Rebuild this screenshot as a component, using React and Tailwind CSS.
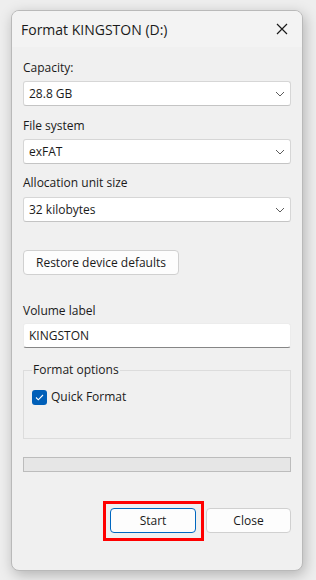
import React from 'react';

const font = { fontFamily: '"Open Sans", "Noto Sans", sans-serif' };

const Chevron = () => (
  <svg width="10" height="6" viewBox="0 0 10 6" className="mr-[5px]">
    <polyline points="1,1 5,5 9,1" fill="none" stroke="#5c5c5c" strokeWidth="1" />
  </svg>
);

const Dropdown = ({ value }) => (
  <div className="flex h-[25px] items-center justify-between rounded-[3px] border border-[#d6d6d6] border-b-[#c4c4c4] bg-white pl-[5px] text-[12px] text-[#1a1a1a]">
    <span>{value}</span>
    <Chevron />
  </div>
);

export default function App() {
  return (
    <div className="h-[580px] w-[316px] bg-[#eeeeee] pl-[11px] pt-[10px]" style={font}>
      <div className="flex h-[561px] w-[292px] flex-col overflow-hidden rounded-[8px] border border-[#b9b9b9] bg-[#f0f0f0] shadow-[2px_4px_14px_rgba(0,0,0,0.25)]">
        {/* title bar */}
        <div className="flex h-[36px] shrink-0 items-center justify-between bg-[#f3f3f3] pl-[9px] pr-[14px]">
          <span className="text-[14px] text-[#1a1a1a]">Format KINGSTON (D:)</span>
          <svg width="12" height="12" viewBox="0 0 12 12">
            <path d="M1 1 L11 11 M11 1 L1 11" stroke="#1a1a1a" strokeWidth="1.2" />
          </svg>
        </div>

        <div className="flex flex-col px-[11px] text-[12px] text-[#1a1a1a]">
          <div className="mt-[13px] h-[16px] leading-[16px]">Capacity:</div>
          <div className="mt-[5px]"><Dropdown value="28.8 GB" /></div>

          <div className="mt-[12px] h-[16px] leading-[16px]">File system</div>
          <div className="mt-[5px]"><Dropdown value="exFAT" /></div>

          <div className="mt-[11px] h-[16px] leading-[16px]">Allocation unit size</div>
          <div className="mt-[6px]"><Dropdown value="32 kilobytes" /></div>

          <div className="mt-[28px]">
            <button className="h-[25px] w-[156px] rounded-[4px] border border-[#d0d0d0] bg-[#fdfdfd] text-[12px] text-[#1a1a1a]">
              Restore device defaults
            </button>
          </div>

          <div className="mt-[28px] h-[16px] leading-[16px]">Volume label</div>
          <div className="mt-[4px] flex h-[25px] items-center rounded-[3px] border border-[#ececec] border-b-[#868686] bg-white pl-[5px]">
            KINGSTON
          </div>

          <fieldset className="mt-[14px] h-[77px] border border-[#dcdcdc] px-[8px] pt-0">
            <legend className="px-[1px] leading-[16px]">Format options</legend>
            <label className="mt-[10px] flex items-center gap-[4px]">
              <span className="flex h-[15px] w-[15px] items-center justify-center rounded-[3px] bg-[#005fb8]">
                <svg width="9" height="7" viewBox="0 0 9 7">
                  <polyline points="1,3.5 3.3,5.8 8,1" fill="none" stroke="#ffffff" strokeWidth="1.1" />
                </svg>
              </span>
              <span>Quick Format</span>
            </label>
          </fieldset>

          <div className="mt-[18px] h-[15px] border border-[#bcbcbc] bg-[#e6e6e6]" />

          <div className="mt-[36px] flex justify-end gap-[10px]">
            <div className="relative">
              <div className="absolute -left-[7px] -top-[7px] -right-[8px] -bottom-[8px] border-[3px] border-[#ff0000]" />
              <button className="relative h-[25px] w-[86px] rounded-[4px] border border-[#0067c0] bg-[#fdfdfd] text-[12px] text-[#1a1a1a]">
                Start
              </button>
            </div>
            <button className="h-[25px] w-[85px] rounded-[4px] border border-[#d0d0d0] bg-[#fdfdfd] text-[12px] text-[#1a1a1a]">
              Close
            </button>
          </div>
        </div>
      </div>
    </div>
  );
}
